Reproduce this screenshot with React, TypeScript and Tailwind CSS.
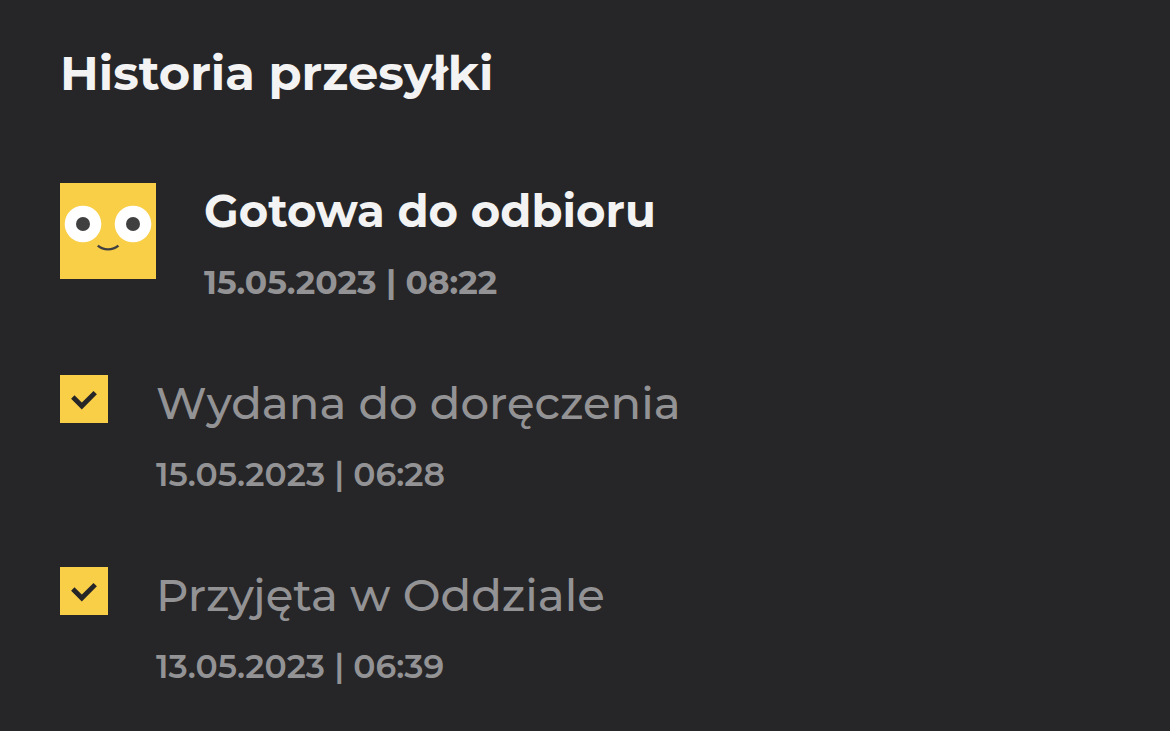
import React from 'react';

type HistoryEvent = {
  status: string;
  date: string;
  current?: boolean;
};

const events: HistoryEvent[] = [
  { status: 'Gotowa do odbioru', date: '15.05.2023 | 08:22', current: true },
  { status: 'Wydana do doręczenia', date: '15.05.2023 | 06:28' },
  { status: 'Przyjęta w Oddziale', date: '13.05.2023 | 06:39' },
];

function FaceIcon() {
  return (
    <svg viewBox="0 0 96 96" className="size-24 shrink-0" aria-hidden="true">
      <rect width="96" height="96" fill="#f9cf47" />
      <circle cx="23" cy="41" r="18.3" fill="#fff" />
      <circle cx="73" cy="41" r="18.3" fill="#fff" />
      <circle cx="23" cy="41" r="7" fill="#404041" />
      <circle cx="73" cy="41" r="7" fill="#404041" />
      <path d="M37.8 62.6C43.5 67.6 52.5 67.6 58.4 62.6" fill="none" stroke="#404041" strokeWidth="2.4" />
    </svg>
  );
}

function CheckIcon() {
  return (
    <svg viewBox="0 0 48 48" className="size-12 shrink-0" aria-hidden="true">
      <rect width="48" height="48" fill="#f9cf47" />
      <path d="M12.8 22L21.8 31L35.2 17.6" fill="none" stroke="#262628" strokeWidth="4.8" />
    </svg>
  );
}

export default function App() {
  return (
    <main className="min-h-screen bg-[#262628] px-[60px] pt-11 font-['Montserrat','Inter',sans-serif]">
      <h1 className="text-[48px] leading-[58px] font-bold text-[#f3f3f3]">Historia przesyłki</h1>

      {/* Timeline */}
      <ol className="mt-[81px] space-y-[72px]">
        {events.map((event) => (
          <li key={event.status} className="flex items-start gap-12">
            {event.current ? <FaceIcon /> : <CheckIcon />}
            <div>
              <h2
                className={
                  event.current
                    ? 'text-[45px] leading-[56px] font-bold text-[#f3f3f3]'
                    : 'text-[45px] leading-[56px] font-medium text-[#939395]'
                }
              >
                {event.status}
              </h2>
              <p
                className={
                  event.current
                    ? 'mt-[22px] text-[33px] leading-[42px] font-bold text-[#939395]'
                    : 'mt-[22px] text-[33px] leading-[42px] font-semibold text-[#939395]'
                }
              >
                {event.date}
              </p>
            </div>
          </li>
        ))}
      </ol>
    </main>
  );
}
